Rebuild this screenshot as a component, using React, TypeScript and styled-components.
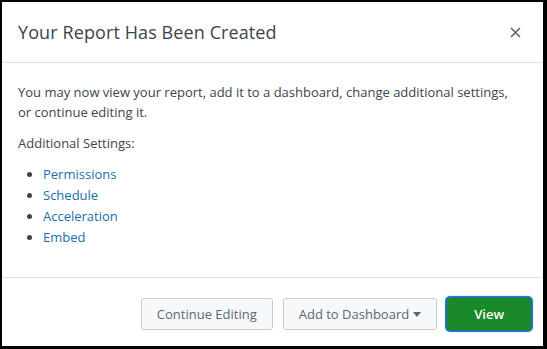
import React from 'react';
import styled, { createGlobalStyle } from 'styled-components';

const GlobalStyle = createGlobalStyle`
    html, body {
        margin: 0;
        padding: 0;
        background: #000;
    }
    body {
        font-family: 'Open Sans', 'Liberation Sans', sans-serif;
    }
`;

const Frame = styled.div`
    width: 547px;
    height: 349px;
    box-sizing: border-box;
    padding: 2px 4px 3px 2px;
`;

const Dialog = styled.div`
    height: 100%;
    background: #fff;
    display: flex;
    flex-direction: column;
`;

const Header = styled.div`
    height: 60px;
    display: flex;
    align-items: center;
    justify-content: space-between;
    padding: 0 18px 0 16px;
    border-bottom: 1px solid #dde2e5;
    flex-shrink: 0;
`;

const Title = styled.h2`
    margin: 0;
    font-size: 18px;
    font-weight: 500;
    color: #3c444d;
    letter-spacing: 0.1px;
`;

const Close = styled.button`
    border: none;
    background: none;
    padding: 0;
    width: 20px;
    height: 20px;
    display: flex;
    align-items: center;
    justify-content: center;
    cursor: pointer;
`;

const Body = styled.div`
    flex: 1;
    padding: 19px 28px 0 16px;
    font-size: 13px;
    line-height: 20px;
    color: #3c444d;
    border-bottom: 1px solid #dde2e5;
`;

const Paragraph = styled.p`
    margin: 0 0 11px;
`;

const LinkList = styled.ul`
    margin: 0;
    padding: 0 0 0 25px;
    list-style: disc;
    li {
        line-height: 21px;
    }
`;

const Link = styled.a`
    color: #1a6fa8;
    text-decoration: none;
`;

const Footer = styled.div`
    height: 68px;
    display: flex;
    align-items: center;
    justify-content: flex-end;
    gap: 10px;
    padding: 4px 12px 0 0;
    box-sizing: border-box;
    flex-shrink: 0;
`;

const Button = styled.button<{ $primary?: boolean }>`
    height: 32px;
    box-sizing: border-box;
    padding: 0 ${(p) => (p.$primary ? '26px' : '15px')};
    border-radius: 3px;
    font-family: inherit;
    font-size: 13px;
    display: flex;
    align-items: center;
    gap: 4px;
    cursor: pointer;
    border: 1px solid ${(p) => (p.$primary ? '#1a8929' : '#c3cbd4')};
    background: ${(p) => (p.$primary ? '#1a8929' : '#f7f8fa')};
    color: ${(p) => (p.$primary ? '#fff' : '#5c6773')};
    font-weight: ${(p) => (p.$primary ? 600 : 400)};
    box-shadow: ${(p) => (p.$primary ? '0 0 1px 2px #1e6db3' : 'none')};
`;

const Caret = styled.span`
    width: 0;
    height: 0;
    border-left: 4px solid transparent;
    border-right: 4px solid transparent;
    border-top: 5px solid #5c6773;
    margin-top: 1px;
`;

const settings = ['Permissions', 'Schedule', 'Acceleration', 'Embed'];

export default function App() {
    return (
        <>
            <GlobalStyle />
            <Frame>
                <Dialog>
                    <Header>
                        <Title>Your Report Has Been Created</Title>
                        <Close aria-label="Close">
                            <svg width="11" height="11" viewBox="0 0 11 11">
                                <path d="M1 1L10 10M10 1L1 10" stroke="#5c6773" strokeWidth="1.6" />
                            </svg>
                        </Close>
                    </Header>
                    <Body>
                        <Paragraph>
                            You may now view your report, add it to a dashboard, change additional settings, or continue
                            editing it.
                        </Paragraph>
                        <Paragraph>Additional Settings:</Paragraph>
                        <LinkList>
                            {settings.map((s) => (
                                <li key={s}>
                                    <Link href="#">{s}</Link>
                                </li>
                            ))}
                        </LinkList>
                    </Body>
                    <Footer>
                        <Button>Continue Editing</Button>
                        <Button>
                            Add to Dashboard <Caret />
                        </Button>
                        <Button $primary>View</Button>
                    </Footer>
                </Dialog>
            </Frame>
        </>
    );
}
